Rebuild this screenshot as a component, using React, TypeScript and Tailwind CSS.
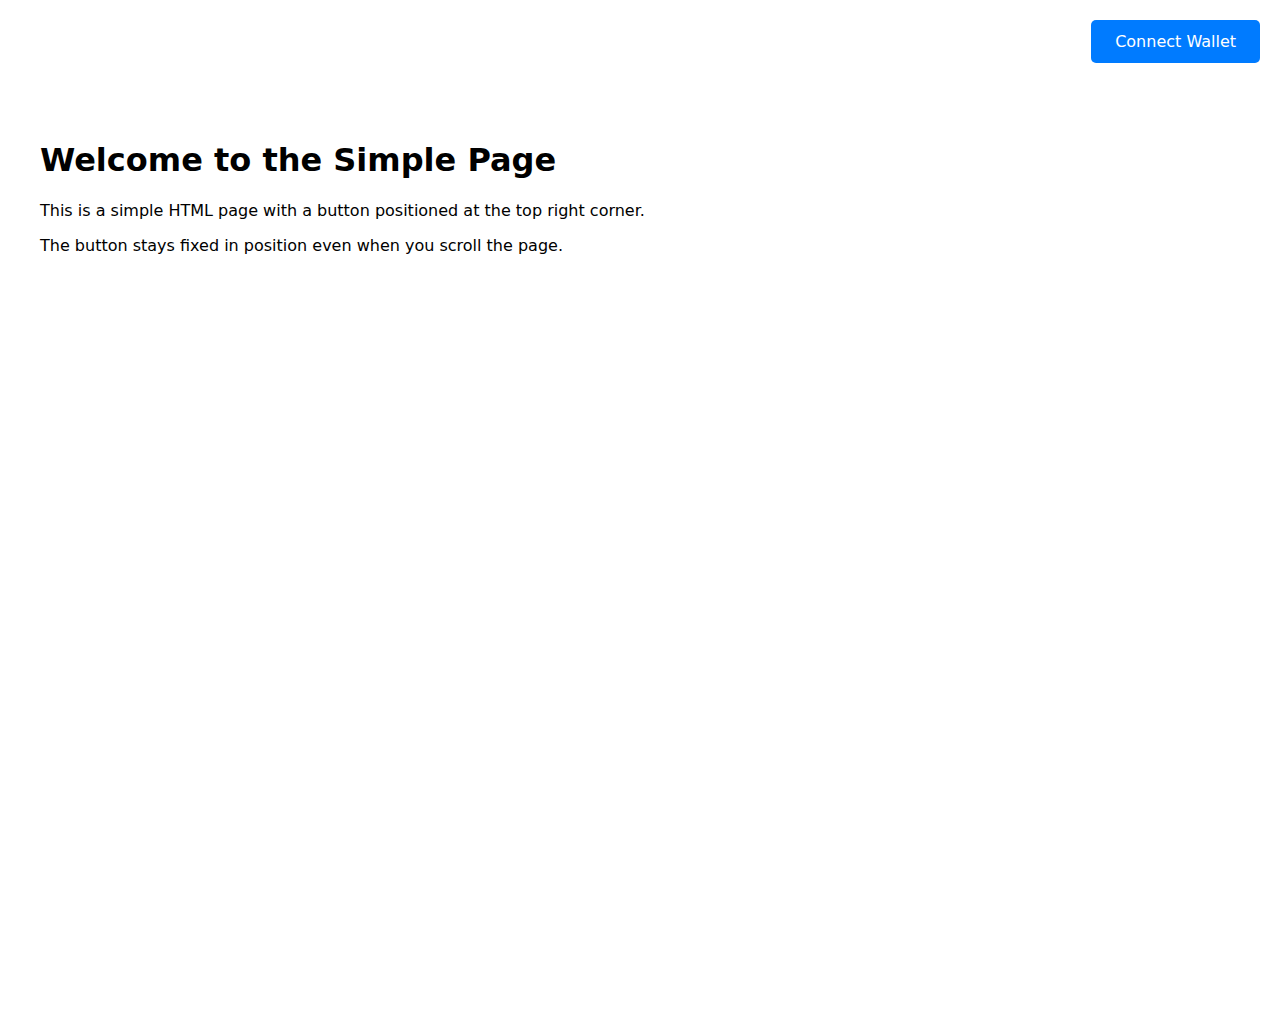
import React from "react";

export default function App() {
  return (
    <div className="min-h-screen bg-white text-black">
      <div className="font-['DejaVu_Sans',sans-serif] leading-[normal] pt-[141px] px-[40px]">
        <h1 className="text-[32px] font-bold leading-[normal] m-0 mb-[22.44px]">Welcome to the Simple Page</h1>
        <p className="text-base leading-[normal] my-4">This is a simple HTML page with a button positioned at the top right corner.</p>
        <p className="text-base leading-[normal] my-4">The button stays fixed in position even when you scroll the page.</p>
      </div>
      <button className="fixed top-5 right-5 bg-[#007bff] text-white text-base leading-[normal] px-6 py-3 rounded-[5px] font-['DejaVu_Sans',sans-serif] cursor-pointer">
        Connect Wallet
      </button>
    </div>
  );
}
